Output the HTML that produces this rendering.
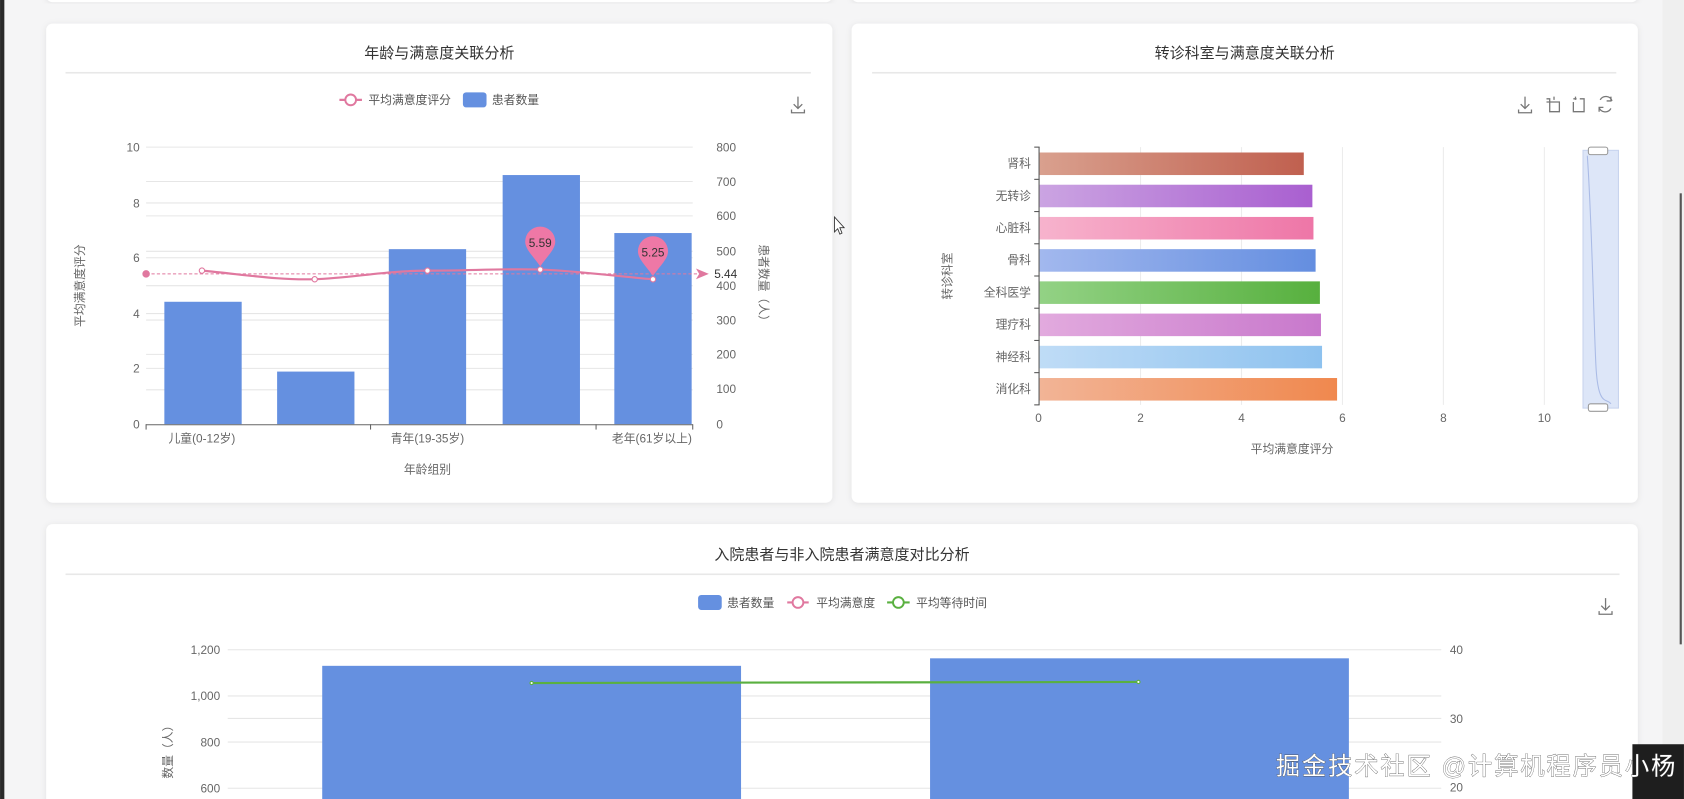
<!DOCTYPE html>
<html><head><meta charset="utf-8"><style>
html,body{margin:0;padding:0;background:#f5f5f6;overflow:hidden}
svg{display:block;font-family:"Liberation Sans","Noto Sans CJK SC",sans-serif}
</style></head><body>
<svg width="1684" height="799" viewBox="0 0 1568 744" xmlns="http://www.w3.org/2000/svg">
<defs>
<filter id="sh" x="-5%" y="-5%" width="110%" height="110%"><feDropShadow dx="0" dy="1" stdDeviation="3" flood-color="#000" flood-opacity="0.08"/></filter>
<linearGradient id="g1"><stop offset="0" stop-color="#d9a08e"/><stop offset="1" stop-color="#c0604f"/></linearGradient>
<linearGradient id="g2"><stop offset="0" stop-color="#cba4e2"/><stop offset="1" stop-color="#a95fd0"/></linearGradient>
<linearGradient id="g3"><stop offset="0" stop-color="#f7b3cd"/><stop offset="1" stop-color="#ee76a7"/></linearGradient>
<linearGradient id="g4"><stop offset="0" stop-color="#a2b8ee"/><stop offset="1" stop-color="#648ee0"/></linearGradient>
<linearGradient id="g5"><stop offset="0" stop-color="#93d285"/><stop offset="1" stop-color="#57b03e"/></linearGradient>
<linearGradient id="g6"><stop offset="0" stop-color="#e2aade"/><stop offset="1" stop-color="#c878cc"/></linearGradient>
<linearGradient id="g7"><stop offset="0" stop-color="#bfdcf6"/><stop offset="1" stop-color="#8ec2ef"/></linearGradient>
<linearGradient id="g8"><stop offset="0" stop-color="#f2b496"/><stop offset="1" stop-color="#f0884e"/></linearGradient>
</defs>
<rect x="0" y="0" width="1568" height="744" fill="#f5f5f6"/>
<rect x="0" y="0" width="4" height="744" fill="#2a2a2a"/>
<rect x="1548" y="0" width="20" height="744" fill="#efefef"/>
<rect x="1564" y="180" width="2" height="420" fill="#555"/>
<rect x="43" y="-20" width="732" height="22" rx="6" fill="#fff" filter="url(#sh)"/>
<rect x="793" y="-20" width="732" height="22" rx="6" fill="#fff" filter="url(#sh)"/>

<rect x="43" y="22" width="732" height="446" rx="6" fill="#fff" filter="url(#sh)"/>
<text x="409" y="54" font-size="14" fill="#333" text-anchor="middle">年龄与满意度关联分析</text>
<rect x="61" y="67" width="694" height="1.5" fill="#e8e8e8"/>
<g font-size="11" fill="#555">
<line x1="316" y1="93" x2="337" y2="93" stroke="#e0789f" stroke-width="2"/><circle cx="326.5" cy="93" r="5" fill="#fff" stroke="#e0789f" stroke-width="1.8"/>
<text x="343" y="97">平均满意度评分</text>
<rect x="431" y="86" width="22" height="14" rx="3" fill="#6590e0"/>
<text x="458" y="97">患者数量</text>
</g>
<g stroke="#777" stroke-width="1.2" fill="none"><path d="M743 90v11M739 97l4 4 4-4M737 102v3h12v-3"/></g>
<g stroke="#e6e6e6" stroke-width="1">
<line x1="136" y1="137" x2="645" y2="137"/><line x1="136" y1="169" x2="645" y2="169"/><line x1="136" y1="189" x2="645" y2="189"/><line x1="136" y1="201" x2="645" y2="201"/><line x1="136" y1="234" x2="645" y2="234"/><line x1="136" y1="240" x2="645" y2="240"/><line x1="136" y1="266" x2="645" y2="266"/><line x1="136" y1="292" x2="645" y2="292"/><line x1="136" y1="298" x2="645" y2="298"/><line x1="136" y1="330" x2="645" y2="330"/><line x1="136" y1="343" x2="645" y2="343"/><line x1="136" y1="363" x2="645" y2="363"/>
</g>
<g fill="#6590e0">
<rect x="153" y="281" width="72" height="114"/><rect x="258" y="346" width="72" height="49"/><rect x="362" y="232" width="72" height="163"/><rect x="468" y="163" width="72" height="232"/><rect x="572" y="217" width="72" height="178"/>
</g>
<line x1="136" y1="395.5" x2="645" y2="395.5" stroke="#666"/>
<g stroke="#666"><line x1="136" y1="395" x2="136" y2="400"/><line x1="345" y1="395" x2="345" y2="400"/><line x1="555" y1="395" x2="555" y2="400"/><line x1="645" y1="395" x2="645" y2="400"/></g>
<g font-size="11" fill="#666">
<text x="130" y="141" text-anchor="end">10</text><text x="130" y="193" text-anchor="end">8</text><text x="130" y="244" text-anchor="end">6</text><text x="130" y="296" text-anchor="end">4</text><text x="130" y="347" text-anchor="end">2</text><text x="130" y="399" text-anchor="end">0</text>
<text x="667" y="141">800</text><text x="667" y="173">700</text><text x="667" y="205">600</text><text x="667" y="238">500</text><text x="667" y="270">400</text><text x="667" y="302">300</text><text x="667" y="334">200</text><text x="667" y="366">100</text><text x="667" y="399">0</text>
<text x="188" y="412" text-anchor="middle">儿童(0-12岁)</text><text x="398" y="412" text-anchor="middle">青年(19-35岁)</text><text x="607" y="412" text-anchor="middle">老年(61岁以上)</text>
<text x="398" y="441" text-anchor="middle">年龄组别</text>
<text transform="translate(78 266) rotate(-90)" text-anchor="middle">平均满意度评分</text>
<text transform="translate(707 266) rotate(90)" text-anchor="middle">患者数量（人）</text>
</g>
<line x1="136" y1="255" x2="650" y2="255" stroke="#e0789f" stroke-dasharray="3 2" stroke-width="1"/>
<circle cx="136" cy="255" r="3.5" fill="#e0789f"/><path d="M648 250l12 5-12 5 3-5z" fill="#e0789f"/>
<text x="665" y="259" font-size="11" fill="#333">5.44</text>
<path d="M188 252C230 256 260 261 293 260S360 252 398 252 470 250 503 251 580 258 608 260" fill="none" stroke="#e0789f" stroke-width="2"/>
<g fill="#fff" stroke="#e0789f" stroke-width="1"><circle cx="188" cy="252" r="2.5"/><circle cx="293" cy="260" r="2.5"/><circle cx="398" cy="252" r="2.5"/><circle cx="503" cy="251" r="2.5"/><circle cx="608" cy="260" r="2.5"/></g>
<path d="M503 248C496 238 489 232 489 225a14 14 0 0 1 28 0c0 7-7 13-14 23z" fill="#ee78a6"/>
<text x="503" y="230" font-size="11" fill="#333" text-anchor="middle">5.59</text>
<path d="M608 257C601 247 594 241 594 234a14 14 0 0 1 28 0c0 7-7 13-14 23z" fill="#ee78a6"/>
<text x="608" y="239" font-size="11" fill="#333" text-anchor="middle">5.25</text>

<rect x="793" y="22" width="732" height="446" rx="6" fill="#fff" filter="url(#sh)"/>
<text x="1159" y="54" font-size="14" fill="#333" text-anchor="middle">转诊科室与满意度关联分析</text>
<rect x="812" y="67" width="693" height="1.5" fill="#e8e8e8"/>
<g stroke="#777" stroke-width="1.2" fill="none">
<path d="M1420 90v11M1416 97l4 4 4-4M1414 102v3h12v-3"/>
<path d="M1440 92h3v12h9v-9h-12M1447 90v3"/>
<path d="M1465 92h3M1467 90v3M1465 95v9h10v-12h-4"/>
<path d="M1501 94a6 6 0 0 0-11-1M1489 100a6 6 0 0 0 11 1M1500 90v4h-4M1489 104v-4h4"/>
</g>
<g stroke="#ececec"><line x1="1062" y1="137" x2="1062" y2="377"/><line x1="1156" y1="137" x2="1156" y2="377"/><line x1="1250" y1="137" x2="1250" y2="377"/><line x1="1344" y1="137" x2="1344" y2="377"/><line x1="1438" y1="137" x2="1438" y2="377"/></g>
<rect x="968" y="142" width="246" height="21" fill="url(#g1)"/>
<rect x="968" y="172" width="254" height="21" fill="url(#g2)"/>
<rect x="968" y="202" width="255" height="21" fill="url(#g3)"/>
<rect x="968" y="232" width="257" height="21" fill="url(#g4)"/>
<rect x="968" y="262" width="261" height="21" fill="url(#g5)"/>
<rect x="968" y="292" width="262" height="21" fill="url(#g6)"/>
<rect x="968" y="322" width="263" height="21" fill="url(#g7)"/>
<rect x="968" y="352" width="277" height="21" fill="url(#g8)"/>
<line x1="967.5" y1="137" x2="967.5" y2="377" stroke="#555"/>
<g stroke="#555"><line x1="963" y1="137" x2="968" y2="137"/><line x1="963" y1="167" x2="968" y2="167"/><line x1="963" y1="197" x2="968" y2="197"/><line x1="963" y1="227" x2="968" y2="227"/><line x1="963" y1="257" x2="968" y2="257"/><line x1="963" y1="287" x2="968" y2="287"/><line x1="963" y1="317" x2="968" y2="317"/><line x1="963" y1="347" x2="968" y2="347"/><line x1="963" y1="377" x2="968" y2="377"/></g>
<g font-size="11" fill="#666" text-anchor="end">
<text x="960" y="156">肾科</text><text x="960" y="186">无转诊</text><text x="960" y="216">心脏科</text><text x="960" y="246">骨科</text><text x="960" y="276">全科医学</text><text x="960" y="306">理疗科</text><text x="960" y="336">神经科</text><text x="960" y="366">消化科</text>
</g>
<g font-size="11" fill="#666" text-anchor="middle">
<text x="967" y="393">0</text><text x="1062" y="393">2</text><text x="1156" y="393">4</text><text x="1250" y="393">6</text><text x="1344" y="393">8</text><text x="1438" y="393">10</text>
<text x="1203" y="422">平均满意度评分</text>
<text transform="translate(886 257) rotate(-90)">转诊科室</text>
</g>
<rect x="1474" y="140" width="33" height="240" fill="#dde6f8" stroke="#c8d4ee"/>
<path d="M1478 145C1482 200 1484 300 1486 340S1496 370 1500 376" stroke="#aabbe6" fill="none"/>
<rect x="1479" y="137" width="18" height="7" rx="2" fill="#fff" stroke="#999"/>
<rect x="1479" y="376" width="18" height="7" rx="2" fill="#fff" stroke="#999"/>

<rect x="43" y="488" width="1482" height="280" rx="6" fill="#fff" filter="url(#sh)"/>
<text x="784" y="521" font-size="14" fill="#333" text-anchor="middle">入院患者与非入院患者满意度对比分析</text>
<rect x="61" y="534" width="1447" height="1.5" fill="#e8e8e8"/>
<g font-size="11" fill="#555">
<rect x="650" y="554" width="22" height="14" rx="3" fill="#6590e0"/><text x="677" y="565">患者数量</text>
<line x1="733" y1="561" x2="753" y2="561" stroke="#e0789f" stroke-width="2"/><circle cx="743" cy="561" r="5" fill="#fff" stroke="#e0789f" stroke-width="1.8"/><text x="760" y="565">平均满意度</text>
<line x1="826" y1="561" x2="847" y2="561" stroke="#5ab040" stroke-width="2"/><circle cx="836.5" cy="561" r="5" fill="#fff" stroke="#5ab040" stroke-width="1.8"/><text x="853" y="565">平均等待时间</text>
</g>
<g stroke="#777" stroke-width="1.2" fill="none"><path d="M1495 557v11M1491 564l4 4 4-4M1489 569v3h12v-3"/></g>
<g stroke="#e6e6e6"><line x1="212" y1="605" x2="1342" y2="605"/><line x1="212" y1="648" x2="1342" y2="648"/><line x1="212" y1="669" x2="1342" y2="669"/><line x1="212" y1="691" x2="1342" y2="691"/><line x1="212" y1="734" x2="1342" y2="734"/></g>
<rect x="300" y="620" width="390" height="130" fill="#6590e0"/>
<rect x="866" y="613" width="390" height="137" fill="#6590e0"/>
<line x1="495" y1="636" x2="1060" y2="635" stroke="#5ab040" stroke-width="2"/>
<circle cx="495" cy="636" r="1.5" fill="#fff" stroke="#5ab040"/><circle cx="1060" cy="635" r="1.5" fill="#fff" stroke="#5ab040"/>
<g font-size="11" fill="#666">
<text x="205" y="609" text-anchor="end">1,200</text><text x="205" y="652" text-anchor="end">1,000</text><text x="205" y="695" text-anchor="end">800</text><text x="205" y="738" text-anchor="end">600</text>
<text x="1350" y="609">40</text><text x="1350" y="673">30</text><text x="1350" y="737">20</text>
<text transform="translate(160 725) rotate(-90)">数量（人）</text>
</g>
<rect x="1520" y="693" width="48" height="51" fill="#1e1e1e"/>
<text x="1188" y="721" font-size="22.5" fill="#fff" stroke="#444" stroke-width="0.6" paint-order="stroke" textLength="372">掘金技术社区 @计算机程序员小杨</text>
<path d="M777 202v14l3-3 2 5 2-1-2-5h4z" fill="#fff" stroke="#333" stroke-width="0.8"/>
</svg>
</body></html>
